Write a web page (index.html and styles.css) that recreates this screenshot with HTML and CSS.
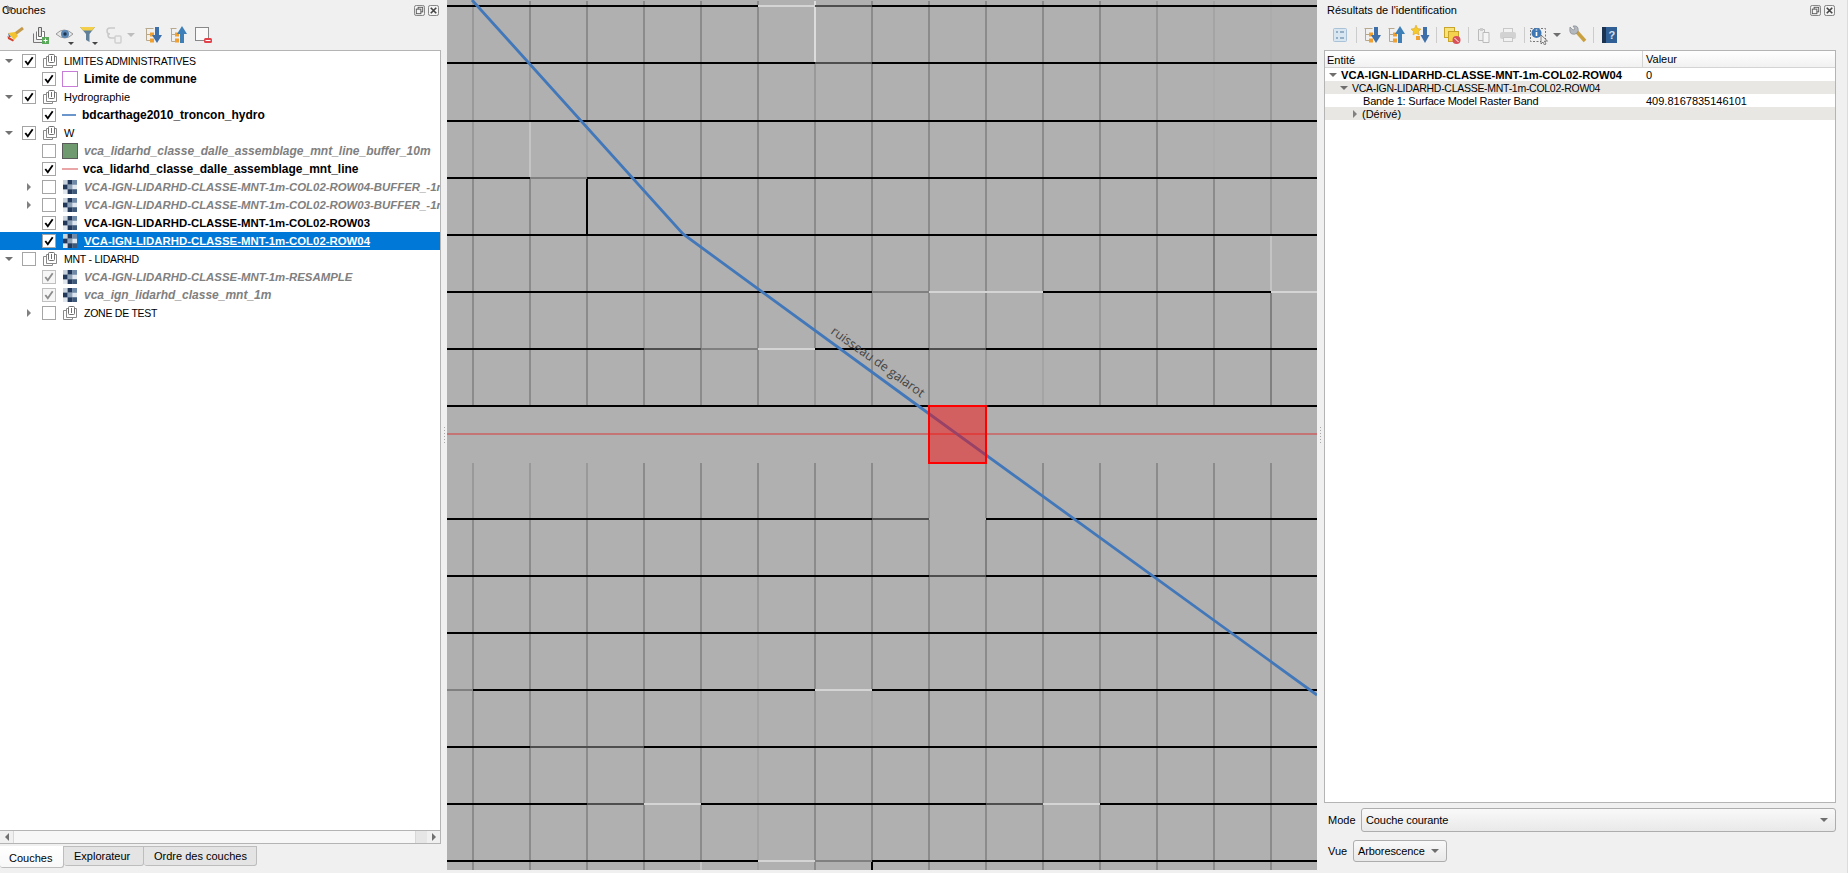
FILE: index.html
```html
<!DOCTYPE html>
<html lang="fr">
<head>
  <meta charset="UTF-8" />
  <title>QGIS</title>
  <link rel="stylesheet" href="styles.css">
</head>
<body>
  <!-- shared icons -->
  <svg class="defs" xmlns="http://www.w3.org/2000/svg">
    <symbol id="tick" viewBox="0 0 13 13"><path d="M2.5 6.5 5.2 10 10.5 2.5" fill="none" stroke="currentColor" stroke-width="2"/></symbol>
    <symbol id="group" viewBox="0 0 14 14">
      <path d="M3.500 4.500h-3v9h9v-2" fill="none" stroke="#8a8a8a"/>
      <path d="M5.500 2.500h-2v9h10v-9h-2" fill="#fff" stroke="#8a8a8a"/>
      <rect x="5.500" y=".5" width="6" height="8" rx="1" fill="#fff" stroke="#707070"/>
      <path d="M8.500 2v5" stroke="#707070"/>
    </symbol>
    <symbol id="raster" viewBox="0 0 13 13">
      <rect width="13" height="13" fill="#dfe6ee"/>
      <rect width="4.4" height="4.4" fill="#c8d3de"/><rect x="4.3" width="4.4" height="4.4" fill="#22385a"/><rect x="8.6" width="4.4" height="4.4" fill="#6e89a8"/>
      <rect y="4.3" width="4.4" height="4.4" fill="#22385a"/><rect x="4.3" y="4.3" width="4.4" height="4.4" fill="#8ea3b8"/>
      <rect x="4.3" y="8.6" width="4.4" height="4.4" fill="#22385a"/><rect x="8.6" y="8.6" width="4.4" height="4.4" fill="#3d5878"/>
    </symbol>
    <symbol id="expand" viewBox="0 0 20 20">
      <path d="M2.5 3.5h8M3.500 3.500v12h5M3.500 9.500h5" fill="none" stroke="#b9a98c"/>
      <rect x="7" y="7.500" width="4" height="4" fill="#f0a030"/><rect x="7" y="13.500" width="4" height="4" fill="#f0a030"/>
      <path d="M12 2h4v8h3l-5 8-5-8h3z" fill="#3f6fa8"/>
    </symbol>
    <symbol id="collapse" viewBox="0 0 20 20">
      <path d="M2.500 3.500h6M3.500 3.500v13h5M3.500 9.500h5" fill="none" stroke="#b9a98c"/>
      <rect x="7" y="7.500" width="4" height="4" fill="#f0a030"/><rect x="7" y="13.500" width="4" height="4" fill="#f0a030"/>
      <path d="M14 1l5 8h-3v9h-4V9H9z" fill="#3f7fb8"/>
    </symbol>
    <symbol id="float" viewBox="0 0 12 12">
      <rect x=".5" y=".5" width="11" height="11" rx="2" fill="#f4f4f4" stroke="#777"/>
      <rect x="4.500" y="2.500" width="5" height="5" fill="none" stroke="#555"/><rect x="2.500" y="4.500" width="5" height="5" fill="#f4f4f4" stroke="#555"/>
    </symbol>
    <symbol id="close" viewBox="0 0 12 12">
      <rect x=".5" y=".5" width="11" height="11" rx="2" fill="#f4f4f4" stroke="#777"/>
      <path d="M3 3l6 6M9 3l-6 6" stroke="#444" stroke-width="1.800"/>
    </symbol>
  </svg>

  <aside class="panel panel-left">
    <div class="dock-title">
      <span>Couches</span>
      <span class="dock-btns">
        <svg><use href="#float"/></svg>
        <svg><use href="#close"/></svg>
      </span>
    </div>

    <div class="toolbar toolbar-left">
      <span class="tool">
        <svg viewBox="0 0 20 20"><path d="M18 3 10 9" stroke="#c49a4a" stroke-width="3"/><path d="M3 8l7-1 3 4-4 4z" fill="#f2c230"/><path d="M3 8l3 4-2 0z" fill="#3d66a8"/><path d="M2.500 11 9 15l-1 1.500-5-2.500z" fill="#d8402c"/></svg>
      </span>
      <span class="tool">
        <svg viewBox="0 0 20 20"><path d="M3.500 8.500v9h9" fill="#eee" stroke="#777"/><path d="M6.500 6.500v8h8v-8h-2" fill="#fff" stroke="#777"/><path d="M8.500 2.500v9h3v-9z" fill="#e2e2e2" stroke="#666"/><rect x="12" y="12" width="7" height="7" fill="#5aa85a"/><path d="M15.500 13.500v4M13.500 15.500h4" stroke="#fff"/></svg>
      </span>
      <span class="tool">
        <svg viewBox="0 0 20 20"><path d="M1 9q8-8 17 0-8 8-17 0z" fill="#e8e8e8" stroke="#999"/><circle cx="10" cy="9" r="4" fill="#5a86b4"/><circle cx="10" cy="9" r="1.700" fill="#1e3550"/><path d="M13 17h6l-3 3z" fill="#444"/></svg>
      </span>
      <span class="tool">
        <svg viewBox="0 0 20 20"><path d="M0 2h15L9.500 9v8L6 15V9z" fill="#5f8098"/><path d="M0 2h15l-3 3.500H3z" fill="#f4cf4a"/><path d="M12 17h6l-3 3z" fill="#444"/></svg>
      </span>
      <span class="tool tool-wide">
        <svg viewBox="0 0 20 20"><path d="M11 3H6Q3 3 3 6t3 3H4v1q0 3 3 3h4" fill="none" stroke="#c9c9c9" stroke-width="1.500"/><rect x="11" y="11" width="6" height="7" rx="1" fill="none" stroke="#d0d0d0" stroke-width="1.500"/></svg>
        <i class="drop drop-off"></i>
      </span>
      <span class="tool"><svg><use href="#expand"/></svg></span>
      <span class="tool"><svg><use href="#collapse"/></svg></span>
      <span class="tool">
        <svg viewBox="0 0 20 20"><rect x="2.500" y="2.500" width="13" height="13" fill="#fafafa" stroke="#888"/><rect x="11" y="13" width="8" height="5" rx="1.500" fill="#e2434b"/><path d="M12.500 15.500h5" stroke="#fff"/></svg>
      </span>
    </div>

    <div class="layer-tree">
      <div class="row"><i class="tw tw-down"></i><span class="cb"><svg><use href="#tick"/></svg></span><svg class="ico"><use href="#group"/></svg><span class="name upper">LIMITES ADMINISTRATIVES</span></div>
      <div class="row lvl"><i class="tw"></i><span class="cb"><svg><use href="#tick"/></svg></span><span class="legend-poly"></span><span class="name bold">Limite de commune</span></div>
      <div class="row"><i class="tw tw-down"></i><span class="cb"><svg><use href="#tick"/></svg></span><svg class="ico"><use href="#group"/></svg><span class="name">Hydrographie</span></div>
      <div class="row lvl"><i class="tw"></i><span class="cb"><svg><use href="#tick"/></svg></span><span class="legend-line blue"></span><span class="name bold">bdcarthage2010_troncon_hydro</span></div>
      <div class="row"><i class="tw tw-down"></i><span class="cb"><svg><use href="#tick"/></svg></span><svg class="ico"><use href="#group"/></svg><span class="name">W</span></div>
      <div class="row lvl"><i class="tw"></i><span class="cb"></span><span class="legend-fill"></span><span class="name bold off">vca_lidarhd_classe_dalle_assemblage_mnt_line_buffer_10m</span></div>
      <div class="row lvl"><i class="tw"></i><span class="cb"><svg><use href="#tick"/></svg></span><span class="legend-line pink"></span><span class="name bold">vca_lidarhd_classe_dalle_assemblage_mnt_line</span></div>
      <div class="row lvl"><i class="tw tw-right"></i><span class="cb"></span><svg class="ico"><use href="#raster"/></svg><span class="name bold caps off">VCA-IGN-LIDARHD-CLASSE-MNT-1m-COL02-ROW04-BUFFER_-1m</span></div>
      <div class="row lvl"><i class="tw tw-right"></i><span class="cb"></span><svg class="ico"><use href="#raster"/></svg><span class="name bold caps off">VCA-IGN-LIDARHD-CLASSE-MNT-1m-COL02-ROW03-BUFFER_-1m</span></div>
      <div class="row lvl"><i class="tw"></i><span class="cb"><svg><use href="#tick"/></svg></span><svg class="ico"><use href="#raster"/></svg><span class="name bold caps">VCA-IGN-LIDARHD-CLASSE-MNT-1m-COL02-ROW03</span></div>
      <div class="row lvl selected"><i class="tw"></i><span class="cb"><svg><use href="#tick"/></svg></span><svg class="ico"><use href="#raster"/></svg><span class="name bold caps">VCA-IGN-LIDARHD-CLASSE-MNT-1m-COL02-ROW04</span></div>
      <div class="row"><i class="tw tw-down"></i><span class="cb"></span><svg class="ico"><use href="#group"/></svg><span class="name upper">MNT - LIDARHD</span></div>
      <div class="row lvl"><i class="tw"></i><span class="cb grey"><svg><use href="#tick"/></svg></span><svg class="ico"><use href="#raster"/></svg><span class="name bold caps off">VCA-IGN-LIDARHD-CLASSE-MNT-1m-RESAMPLE</span></div>
      <div class="row lvl"><i class="tw"></i><span class="cb grey"><svg><use href="#tick"/></svg></span><svg class="ico"><use href="#raster"/></svg><span class="name bold off">vca_ign_lidarhd_classe_mnt_1m</span></div>
      <div class="row lvl"><i class="tw tw-right"></i><span class="cb"></span><svg class="ico"><use href="#group"/></svg><span class="name upper">ZONE DE TEST</span></div>
    </div>

    <div class="hscroll">
      <span class="sb-btn"><i class="tri-left"></i></span>
      <span class="sb-handle"></span>
      <span class="sb-track"></span>
      <span class="sb-btn"><i class="tri-right"></i></span>
    </div>

    <div class="tabs">
      <span class="tab active">Couches</span>
      <span class="tab">Explorateur</span>
      <span class="tab">Ordre des couches</span>
    </div>
  </aside>

  <div class="splitter splitter-left"><i></i></div>

  <main class="map">
    <svg class="map-svg" viewBox="447 0 870 870" xmlns="http://www.w3.org/2000/svg">
      <!-- raster tile edges, verticals first -->
      <path class="v" d="M473 1V406M473 463V870M530 1V406M530 463V870M587 1V406M587 463V870M644 1V406M644 463V870M701 1V406M701 463V870M758 1V406M758 463V870M815 1V406M815 463V870M872 1V406M872 463V870M929 1V406M929 463V870M986 1V406M986 463V870M1043 1V406M1043 463V870M1100 1V406M1100 463V870M1157 1V406M1157 463V870M1214 1V406M1214 463V870M1271 1V406M1271 463V870"/>
      <path class="v-soft" d="M473 1V178M530 63V121M644 178V349M815 63V121M815 349V406M986 349V406M1043 292V349M1100 292V349M1157 1V121M1271 63V235M473 463V519M530 463V519M587 463V519M929 463V519M758 576V633M701 690V747M815 690V747"/>
      <path class="v-pale" d="M587 121V178M1043 349V406M1214 1V63M758 633V870M872 690V747"/>
      <path class="v-ghost" d="M1214 63V178M1271 1V63"/>
      <path class="v-light" d="M530 121V178M1271 235V292M701 861V870"/>
      <path class="v-white" d="M815 1V63"/>
      <path class="v-deep" d="M986 519V576M929 690V747M1271 292V406M1214 235V292"/>

      <path class="h" d="M447 6H1317M447 63H1317M447 121H1317M447 178H1317M447 235H1317M447 292H1317M447 349H1317M447 406H1317M447 519H1317M447 576H1317M447 633H1317M447 690H1317M447 747H1317M447 804H1317M447 861H1317"/>
      <path class="v-black" d="M587 178V235M872 861V870"/>
      <path class="h-gap" d="M929 519H986"/>
      <path class="h-dark" d="M815 6H872M815 63H872M644 349H701M872 519H929M929 349H986M929 576H986M530 747H644M587 804H644M986 804H1043"/>
      <path class="h-mid" d="M701 349H758M447 690H473M530 178H587M872 292H929M815 861H872"/>
      <path class="h-light" d="M758 6H815M929 292H1043M1271 292H1317M758 349H815M815 690H872M644 804H701M1043 804H1100M758 861H815"/>

      <path class="red-line" d="M447 434H1317"/>
      <path class="river" d="M472 0 683 234 928 413 1317 695"/>
      <text class="river-label" transform="translate(830 333) rotate(35.500)">ruisseau de galarot</text>
      <rect class="hit" x="929" y="406" width="57" height="57"/>
    </svg>
  </main>

  <div class="splitter splitter-right"><i></i></div>

  <aside class="panel panel-right">
    <div class="dock-title">
      <span>Résultats de l'identification</span>
      <span class="dock-btns">
        <svg><use href="#float"/></svg>
        <svg><use href="#close"/></svg>
      </span>
    </div>

    <div class="toolbar toolbar-right">
      <span class="tool">
        <svg viewBox="0 0 20 20"><rect x="3.500" y="3.500" width="13" height="13" rx="1" fill="#d8e6f2" stroke="#a9c2d8"/><path d="M6 7h2M6 13h2M10 7h4M10 13h4" stroke="#7f9db8" stroke-width="1.500"/></svg>
      </span>
      <i class="sep"></i>
      <span class="tool"><svg><use href="#expand"/></svg></span>
      <span class="tool"><svg><use href="#collapse"/></svg></span>
      <span class="tool">
        <svg viewBox="0 0 20 20"><path d="M6 0l1.500 3.500L11 4 8.500 6.500 9 10 6 8.200 3 10l.5-3.500L1 4l3.500-.5z" fill="#f4c92c" stroke="#d99a1c" stroke-width=".5"/><rect x="6" y="11" width="4" height="4" fill="#f0a030"/><path d="M13 2h4v8h2.500L15 18l-4.500-8H13z" fill="#3f6fa8"/></svg>
      </span>
      <i class="sep"></i>
      <span class="tool">
        <svg viewBox="0 0 20 20"><rect x="2.500" y="2.500" width="10" height="10" fill="#f8e27a" stroke="#c9a52c"/><rect x="6.500" y="6.500" width="10" height="10" fill="#f4d24e" stroke="#c9a52c"/><circle cx="14.500" cy="15" r="4" fill="#d8505a"/><path d="M12.500 13l4 4" stroke="#fff"/></svg>
      </span>
      <i class="sep"></i>
      <span class="tool">
        <svg viewBox="0 0 20 20"><path d="M4.500 4.500h6v11h-6z" fill="#eee" stroke="#bbb"/><path d="M9 7.500h6v10H9z" fill="#f4f4f4" stroke="#bbb"/><rect x="6" y="3" width="3" height="3" fill="#ccc"/></svg>
      </span>
      <span class="tool">
        <svg viewBox="0 0 20 20"><rect x="5.500" y="3.500" width="9" height="4" fill="#f2f2f2" stroke="#c8c8c8"/><rect x="2" y="7" width="16" height="7" rx="2" fill="#d2d2d2"/><rect x="5.500" y="12.500" width="9" height="4" fill="#f2f2f2" stroke="#c8c8c8"/></svg>
      </span>
      <i class="sep"></i>
      <span class="tool tool-ident">
        <svg viewBox="0 0 20 20"><rect x="1.500" y="3.500" width="15" height="13" fill="none" stroke="#777" stroke-dasharray="2 1.500"/><circle cx="7.500" cy="8" r="5" fill="#3f76b4"/><path d="M7.500 4.500v1M7.500 7v4" stroke="#fff" stroke-width="1.600"/><path d="M12 10v9l2-2 1.500 3 1.500-1-1.500-3h3z" fill="#eee" stroke="#555" stroke-width=".7"/></svg>
        <i class="drop"></i>
      </span>
      <span class="tool tool-spanner">
        <svg viewBox="0 0 20 20"><path d="M9 7 17 16" stroke="#c9a040" stroke-width="3.500"/><path d="M2 2l3 3 2-1-2-3q4-1 5 2 1 3-1 5t-5 1Q1 8 2 2z" fill="#b4b9bf" stroke="#7b8087" stroke-width=".6"/></svg>
      </span>
      <i class="sep"></i>
      <span class="tool">
        <svg viewBox="0 0 20 20"><rect x="3" y="2" width="15" height="16" fill="#2f5f94"/><rect x="3" y="2" width="4" height="16" fill="#1b3350"/><text x="9.500" y="14" class="help-q">?</text></svg>
      </span>
    </div>

    <div class="results">
      <div class="res-head"><span class="col-a">Entité</span><span class="col-b">Valeur</span></div>
      <div class="res-row">
        <span class="col-a bold indent-0"><i class="tw-down small"></i>VCA-IGN-LIDARHD-CLASSE-MNT-1m-COL02-ROW04</span>
        <span class="col-b">0</span>
      </div>
      <div class="res-row alt">
        <span class="col-a indent-1 tight"><i class="tw-down small"></i>VCA-IGN-LIDARHD-CLASSE-MNT-1m-COL02-ROW04</span>
      </div>
      <div class="res-row">
        <span class="col-a indent-2 snug">Bande 1: Surface Model Raster Band</span>
        <span class="col-b">409.8167835146101</span>
      </div>
      <div class="res-row alt">
        <span class="col-a indent-3"><i class="tw-right small"></i>(Dérivé)</span>
      </div>
    </div>

    <div class="form-row form-mode">
      <label>Mode</label>
      <span class="combo combo-wide">Couche courante<i class="drop"></i></span>
    </div>
    <div class="form-row form-view">
      <label>Vue</label>
      <span class="combo">Arborescence<i class="drop"></i></span>
    </div>
  </aside>
</body>
</html>
```

FILE: styles.css
```css
:root {
  --bg: #f0f0f0;
  --line: #b4b4b4;
  --map: #b0b0b0;
}

* {
  box-sizing: border-box;
}

html, body {
  margin: 0;
  height: 100%;
}

body {
  display: flex;
  width: 1848px;
  height: 873px;
  overflow: hidden;
  background: var(--bg);
  color: #000;
  font-family: "Liberation Sans", Arial, sans-serif;
  font-size: 11px;
}

.defs {
  display: none;
}

i {
  display: block;
}

.bold {
  font-weight: bold;
}

/* docks */
.panel {
  display: flex;
  flex-direction: column;
  min-width: 0;
}

.panel-left {
  width: 441px;
}

.panel-right {
  flex: 1;
  padding: 0 11px 0 0;
  border-right: 1px solid #dcdcdc;
}

.dock-title {
  display: flex;
  justify-content: space-between;
  align-items: center;
  height: 20px;
  flex: none;
  padding: 0 2px 0 2px;
}

.panel-right .dock-title {
  padding: 0 1px 0 3px;
}

.dock-btns {
  display: flex;
  gap: 3px;
}

.dock-btns svg {
  width: 11px;
  height: 11px;
  display: block;
}

.toolbar {
  display: flex;
  align-items: center;
  height: 30px;
  flex: none;
}

.toolbar-left {
  padding-left: 2px;
}

.toolbar-right {
  padding-left: 4px;
}

.tool {
  display: flex;
  align-items: center;
  justify-content: center;
  width: 25px;
  height: 24px;
  flex: none;
}

.toolbar-right .tool {
  width: 24px;
}

.tool svg {
  width: 20px;
  height: 20px;
  display: block;
}

.tool-wide {
  width: 38px;
  justify-content: flex-start;
  gap: 3px;
  padding-left: 2px;
}

.toolbar-right .tool-ident {
  width: 39px;
  justify-content: flex-start;
  gap: 4px;
  padding-left: 1px;
}

.toolbar-right .tool-spanner {
  width: 22px;
}

.sep {
  width: 8px;
  height: 20px;
  flex: none;
  background: linear-gradient(#ccc, #ccc) center / 1px 16px no-repeat;
}

.help-q {
  font-size: 11px;
  font-weight: bold;
  fill: #cfe0f2;
}

.drop {
  width: 0;
  height: 0;
  flex: none;
  border: 4px solid transparent;
  border-top: 4px solid #6e6e6e;
  border-bottom: 0;
}

.drop-off {
  border-top-color: #bdbdbd;
}

/* layer tree */
.layer-tree {
  flex: 1;
  min-height: 0;
  padding-top: 1px;
  background: #fff;
  border: 1px solid var(--line);
  border-width: 1px 1px 0 0;
  overflow: hidden;
}

.row {
  display: flex;
  align-items: center;
  height: 18px;
  white-space: nowrap;
}

.row.lvl {
  padding-left: 20px;
}

.row.selected {
  background: #0078d7;
  color: #fff;
}

.selected .name {
  text-decoration: underline;
}

.tw {
  width: 22px;
  height: 18px;
  flex: none;
  position: relative;
}

.tw-down::before,
.tw-right::before,
.tw-down.small,
.tw-right.small {
  content: "";
  display: block;
  width: 0;
  height: 0;
  border: 4px solid transparent;
}

.tw-down::before {
  position: absolute;
  left: 5px;
  top: 7px;
  border-width: 4px 4px 0;
  border-top-color: #727272;
}

.tw-right::before {
  position: absolute;
  left: 7px;
  top: 5px;
  border-width: 4px 0 4px 4px;
  border-left-color: #808080;
}

.cb {
  display: block;
  width: 14px;
  height: 14px;
  flex: none;
  background: #fff;
  border: 1px solid #a5a5a5;
  color: #000;
}

.cb svg {
  display: block;
  width: 12px;
  height: 12px;
}

.cb.grey {
  color: #8c8c8c;
  background: #f6f6f6;
  border-color: #c0c0c0;
}

.ico {
  width: 14px;
  height: 14px;
  margin-left: 7px;
  flex: none;
  display: block;
}

.legend-poly,
.legend-fill {
  width: 16px;
  height: 16px;
  margin: 0 -1px 0 6px;
  flex: none;
}

.legend-poly {
  background: #fff;
  border: 1px solid #c77dd8;
}

.legend-fill {
  background: #6f9a6f;
  border: 1px solid #5a5a5a;
}

.legend-line {
  width: 14px;
  height: 2px;
  margin-left: 6px;
  flex: none;
}

.legend-line.blue {
  background: #6a96cc;
}

.legend-line.pink {
  width: 16px;
  margin-right: -2px;
  background: #eaa6a6;
}

.name {
  margin-left: 7px;
}

.name.bold {
  font-size: 12px;
}

.name.bold.caps {
  font-size: 11.4px;
}

.name.upper {
  font-size: 10.5px;
  letter-spacing: -0.25px;
}

.legend-line.blue + .name {
  margin-left: 6px;
}

.off {
  color: #808080;
  font-style: italic;
}

/* scrollbar and tabs */
.hscroll {
  display: flex;
  height: 14px;
  flex: none;
  background: #fff;
  border: 1px solid var(--line);
  border-width: 1px 1px 1px 0;
}

.sb-btn {
  display: flex;
  align-items: center;
  justify-content: center;
  width: 13px;
  flex: none;
  background: #f0f0f0;
}

.sb-handle {
  flex: 1;
  background: #f7f7f7;
  border: 1px solid #d8d8d8;
  border-width: 0 1px;
}

.sb-track {
  width: 11px;
  background: #e6e6e6;
}

.tri-left,
.tri-right {
  width: 0;
  height: 0;
  border: 4px solid transparent;
}

.tri-left {
  border-left: 0;
  border-right-color: #707070;
}

.tri-right {
  border-right: 0;
  border-left-color: #707070;
}

.tabs {
  display: flex;
  height: 29px;
  flex: none;
  padding-top: 2px;
  white-space: nowrap;
}

.tab {
  display: flex;
  align-items: center;
  height: 20px;
  padding: 0 10px;
  background: #e4e4e4;
  border: 1px solid #bdbdbd;
  border-left: 0;
  border-radius: 0 0 3px 3px;
}

.tab.active {
  height: 22px;
  width: 64px;
  padding: 2px 0 0 9px;
  background: linear-gradient(#fff, #f8f8f8);
  border-top: 0;
}

.tab:nth-child(2) {
  width: 80px;
}

.tab:nth-child(3) {
  width: 113px;
}

/* map canvas */
.splitter {
  display: flex;
  align-items: center;
  justify-content: center;
  height: 870px;
  flex: none;
}

.splitter-left {
  width: 6px;
}

.splitter-right {
  width: 7px;
}

.splitter i {
  width: 1px;
  height: 16px;
  background: repeating-linear-gradient(#a8a8a8 0 1px, transparent 1px 3px);
}

.map {
  width: 870px;
  height: 870px;
  flex: none;
  background: var(--map);
}

.map-svg {
  display: block;
  width: 870px;
  height: 870px;
}

.map-svg path {
  fill: none;
  shape-rendering: crispEdges;
}

.h { stroke: #000; stroke-width: 2; }
.h-gap { stroke: var(--map); stroke-width: 2; }
.h-dark { stroke: #4e4e4e; stroke-width: 2; }
.h-mid { stroke: #808080; stroke-width: 2; }
.h-light { stroke: #d4d4d4; stroke-width: 2; }

.v { stroke: #8b8b8b; stroke-width: 2; }
.v-soft { stroke: #999; stroke-width: 2; }
.v-pale { stroke: #a4a4a4; stroke-width: 2; }
.v-ghost { stroke: #acacac; stroke-width: 2; }
.v-light { stroke: #c4c4c4; stroke-width: 2; }
.v-white { stroke: #dcdcdc; stroke-width: 2; }
.v-deep { stroke: #808080; stroke-width: 2; }
.v-black { stroke: #000; stroke-width: 2; }

.red-line {
  stroke: #c47474;
  stroke-width: 2;
}

.map-svg .river {
  stroke: #4278ba;
  stroke-width: 2.800;
  shape-rendering: auto;
}

.river-label {
  font-family: "Open Sans", sans-serif;
  font-size: 12.5px;
  fill: #444;
}

.hit {
  fill: rgba(255, 0, 0, 0.45);
  stroke: #f00;
  stroke-width: 2;
}

/* identify results */
.results {
  flex: 1;
  min-height: 0;
  background: #fff;
  border: 1px solid var(--line);
}

.res-head {
  display: flex;
  align-items: center;
  height: 17px;
  background: linear-gradient(#fff, #f1f1f1);
  border-bottom: 1px solid #d4d4d4;
}

.res-head .col-a {
  border-right: 1px solid #d4d4d4;
  height: 100%;
  padding: 2px 0 0 2px;
}

.col-a {
  display: flex;
  align-items: center;
  width: 318px;
  flex: none;
  white-space: nowrap;
}

.col-b {
  padding-left: 3px;
}

.res-row {
  display: flex;
  align-items: center;
  height: 13px;
}

.res-row.alt {
  background: #e9e7e3;
}

.res-row .bold {
  font-size: 11.2px;
}

.tight {
  font-size: 10.5px;
  letter-spacing: -0.28px;
}

.snug {
  letter-spacing: -0.2px;
}

.tw-down.small {
  border-width: 4px 4px 0;
  border-top-color: #6e6e6e;
  margin-right: 4px;
}

.tw-right.small {
  border-width: 4px 0 4px 4px;
  border-left-color: #808080;
  margin-right: 5px;
}

.indent-0 { padding-left: 4px; }
.indent-1 { padding-left: 15px; }
.indent-2 { padding-left: 38px; }
.indent-3 { padding-left: 28px; }

.form-row {
  display: flex;
  align-items: center;
  flex: none;
  padding-left: 4px;
}

.form-mode {
  height: 24px;
  margin-top: 5px;
}

.form-mode label {
  width: 33px;
  flex: none;
}

.form-view {
  height: 22px;
  margin: 8px 0 11px;
}

.form-view label {
  width: 25px;
  flex: none;
}

.combo {
  display: flex;
  align-items: center;
  justify-content: space-between;
  height: 100%;
  width: 94px;
  padding: 0 7px 0 4px;
  letter-spacing: -0.1px;
  background: linear-gradient(#f9f9f9, #e9e9e9);
  border: 1px solid #adadad;
  border-radius: 3px;
}

.combo-wide {
  flex: 1;
}
```
